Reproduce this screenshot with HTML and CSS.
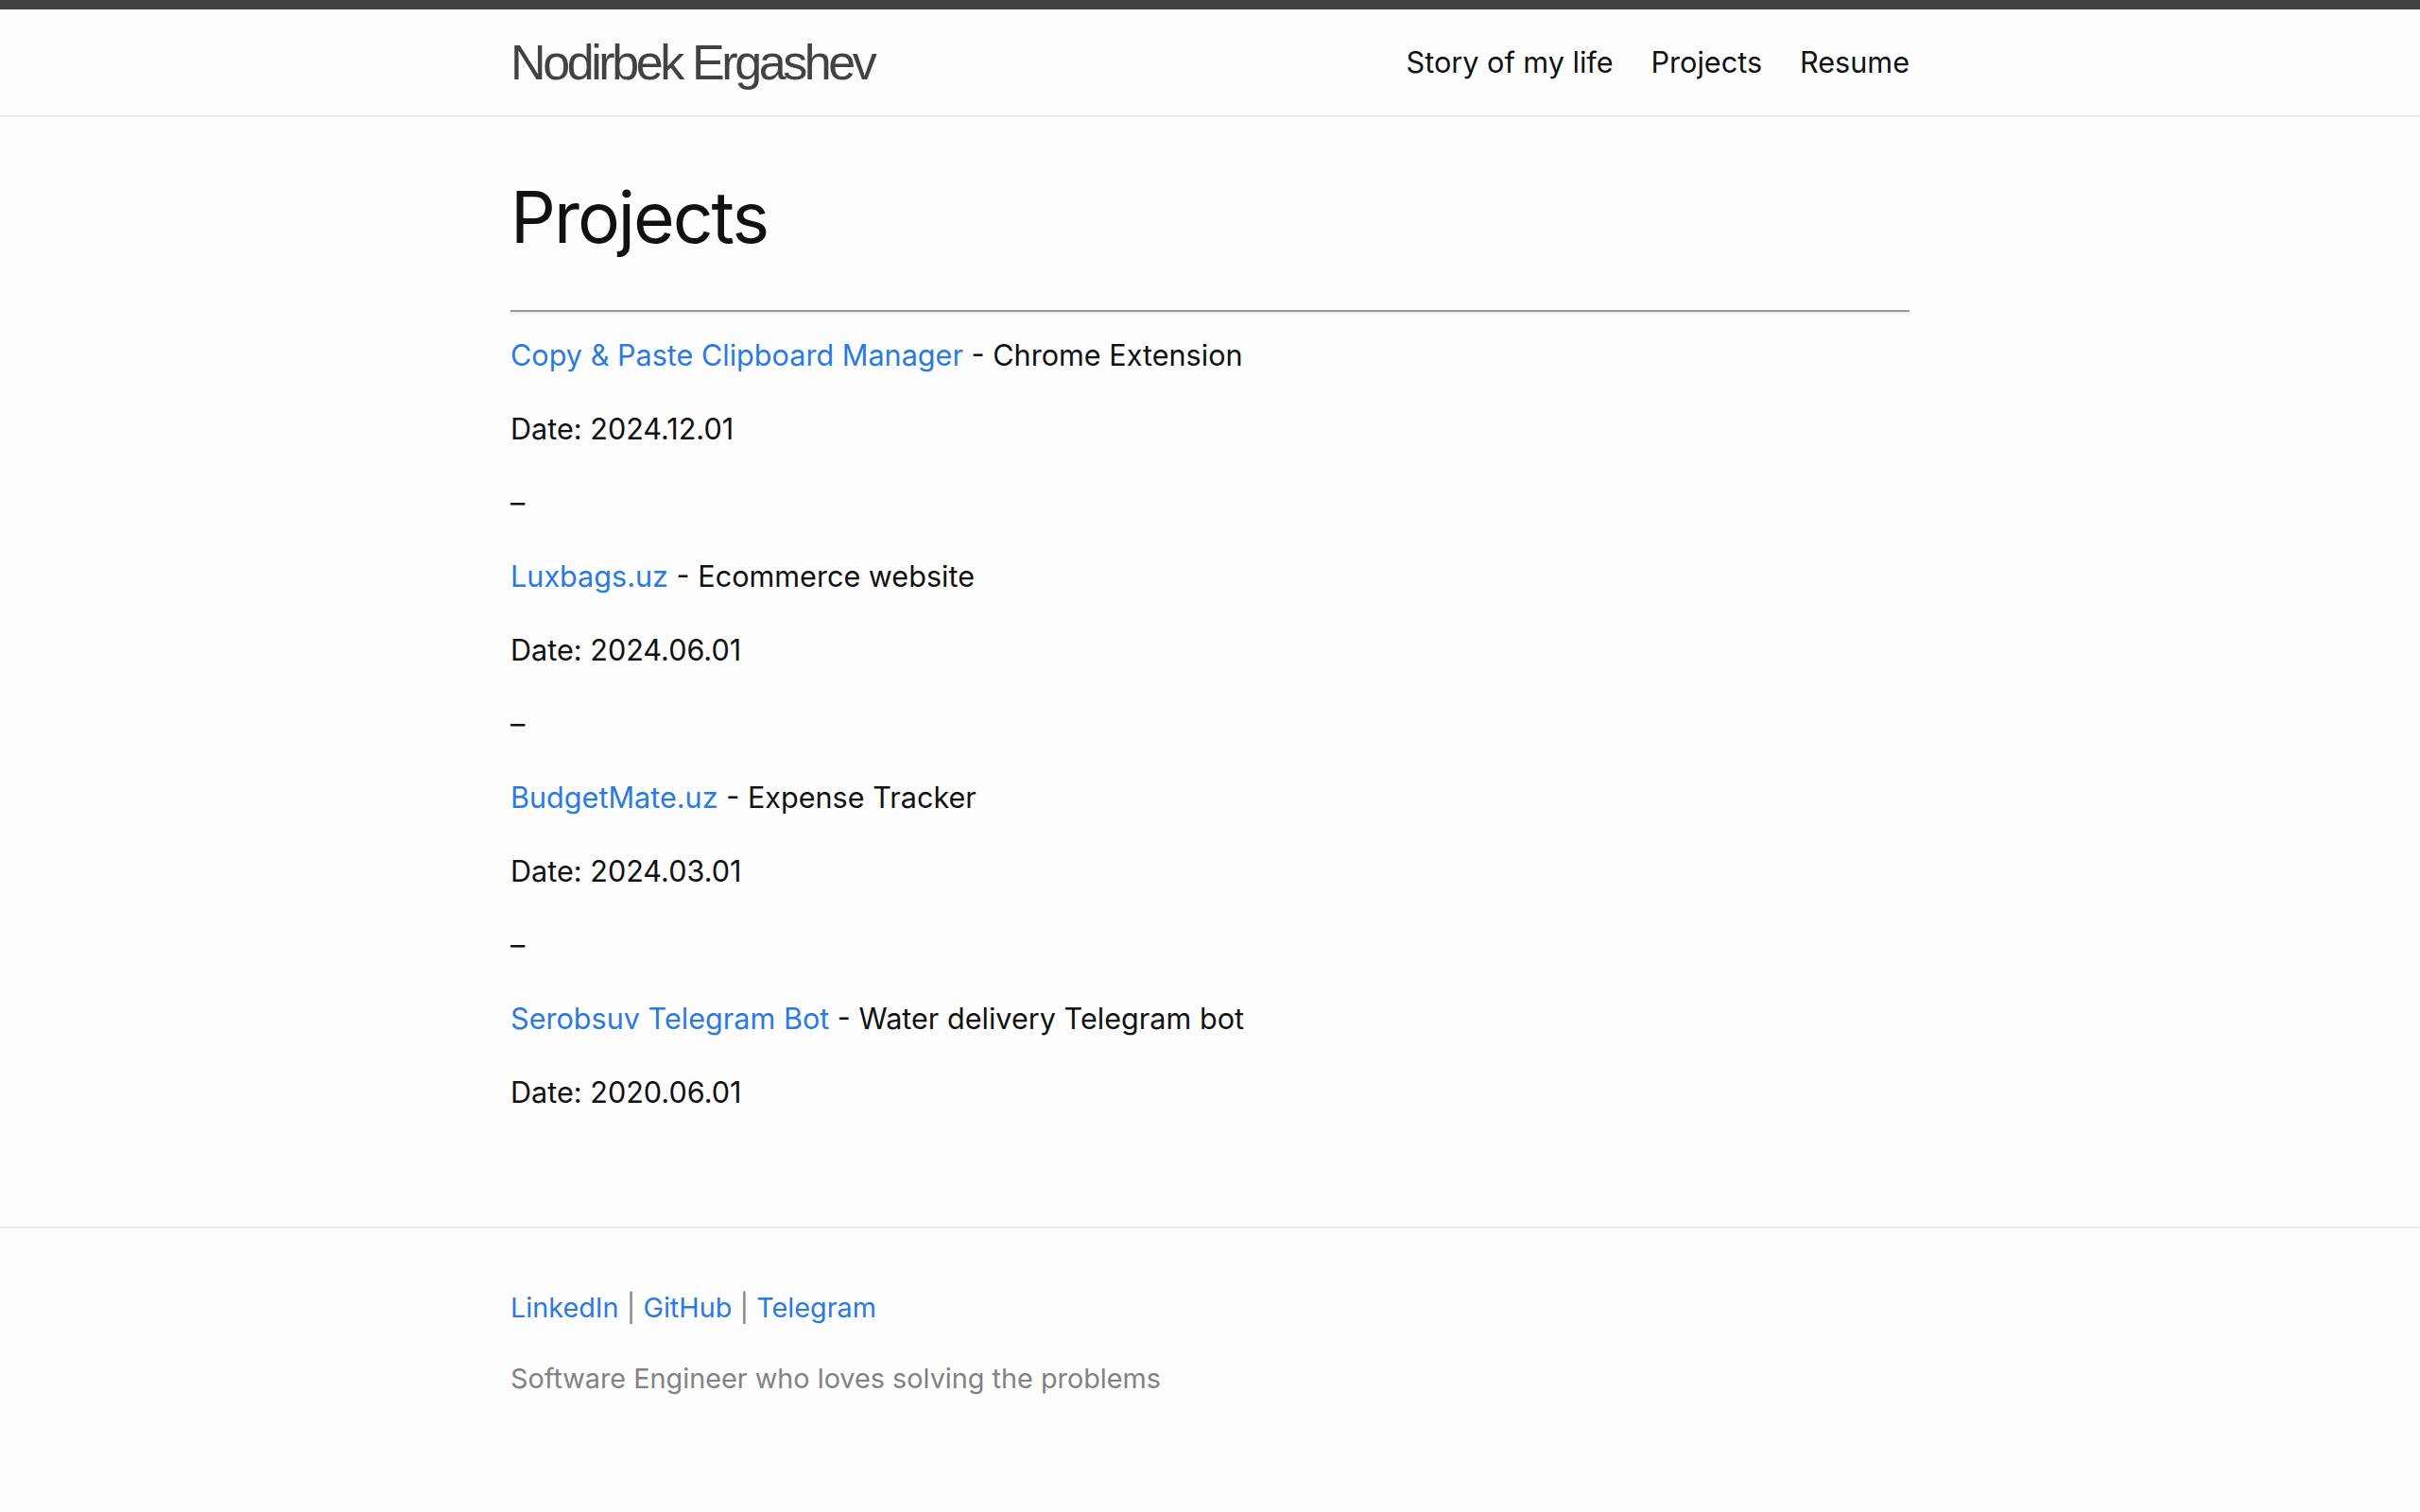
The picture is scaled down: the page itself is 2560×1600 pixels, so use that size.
FILE: index.html
```html
<!DOCTYPE html>
<html lang="en">
<head>
<meta charset="utf-8">
<title>Projects | Nodirbek Ergashev</title>
<link rel="stylesheet" href="styles.css">
</head>
<body>
<header class="site-header">
  <div class="wrapper header-inner">
    <a class="site-title" href="#">Nodirbek Ergashev</a>
    <nav class="site-nav">
      <a class="page-link" href="#">Story of my life</a>
      <a class="page-link" href="#">Projects</a>
      <a class="page-link" href="#">Resume</a>
    </nav>
  </div>
</header>
<main class="page-content">
  <div class="wrapper">
    <article class="post">
      <h1 class="post-title">Projects</h1>
      <hr class="rule">
      <div class="post-content">
        <p><a href="#">Copy &amp; Paste Clipboard Manager</a> - Chrome Extension</p>
        <p>Date: 2024.12.01</p>
        <p>–</p>
        <p><a href="#">Luxbags.uz</a> - Ecommerce website</p>
        <p>Date: 2024.06.01</p>
        <p>–</p>
        <p><a href="#">BudgetMate.uz</a> - Expense Tracker</p>
        <p>Date: 2024.03.01</p>
        <p>–</p>
        <p><a href="#">Serobsuv Telegram Bot</a> - Water delivery Telegram bot</p>
        <p>Date: 2020.06.01</p>
      </div>
    </article>
  </div>
</main>
<footer class="site-footer">
  <div class="wrapper">
    <p class="footer-links"><a href="#">LinkedIn</a> | <a href="#">GitHub</a> | <a href="#">Telegram</a></p>
    <p class="footer-desc">Software Engineer who loves solving the problems</p>
  </div>
</footer>
</body>
</html>
```

FILE: styles.css
```css
html, body {
  margin: 0;
  padding: 0;
}
body {
  background: #fdfdfd;
  color: #111111;
  font-family: Inter, "Noto Sans", sans-serif;
  font-size: 30.6px;
  line-height: 48px;
}
a {
  color: #2a7ae2;
  text-decoration: none;
}
.wrapper {
  width: 1480px;
  margin: 0 auto;
}
.site-header {
  border-top: 10px solid #424242;
  border-bottom: 2px solid #e8e8e8;
  background: #fdfdfd;
}
.header-inner {
  display: flex;
  justify-content: space-between;
  align-items: center;
  height: 112px;
}
.site-title {
  font-family: "Liberation Sans", Arial, sans-serif;
  font-size: 52px;
  letter-spacing: -3.4px;
  color: #424242;
  line-height: 106px;
}
.site-nav {
  display: flex;
  gap: 40px;
  line-height: 108px;
}
.page-link {
  color: #111111;
}
.page-content {
  padding: 60px 0 88px;
}
.post-title {
  margin: 0;
  padding-top: 4px;
  font-size: 75px;
  font-weight: 400;
  letter-spacing: -2px;
  line-height: 84px;
}
.rule {
  margin: 56px 0 20px;
  height: 0;
  border: 0;
  border-top: 2px solid #9a9a9a;
  border-bottom: 2px solid #eeeeee;
}
.post-content p {
  margin: 0 0 30px;
}
.site-footer {
  border-top: 2px solid #e8e8e8;
  padding: 60px 0 60px;
}
.footer-links {
  margin: 0 0 27px;
  font-size: 28.8px;
  color: #828282;
}
.footer-desc {
  margin: 0;
  font-size: 28.8px;
  color: #828282;
}
```
